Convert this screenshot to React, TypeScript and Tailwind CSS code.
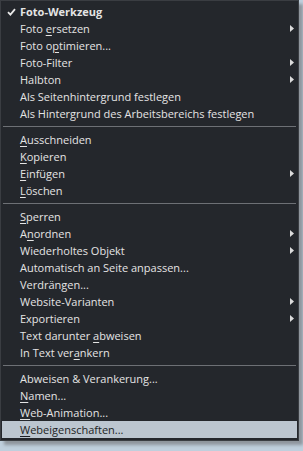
import type { ReactNode } from "react";

type Item =
  | { kind: "sep" }
  | { kind: "item"; label: ReactNode; sub?: boolean; checked?: boolean; bold?: boolean; active?: boolean };

const u = (c: string) => <span className="underline underline-offset-[2px]">{c}</span>;

const items: Item[] = [
  { kind: "item", label: "Foto-Werkzeug", checked: true, bold: true },
  { kind: "item", label: <>Foto {u("e")}rsetzen</>, sub: true },
  { kind: "item", label: <>Foto o{u("p")}timieren...</> },
  { kind: "item", label: "Foto-Filter", sub: true },
  { kind: "item", label: "Halbton", sub: true },
  { kind: "item", label: "Als Seitenhintergrund festlegen" },
  { kind: "item", label: "Als Hintergrund des Arbeitsbereichs festlegen" },
  { kind: "sep" },
  { kind: "item", label: <>{u("A")}usschneiden</> },
  { kind: "item", label: <>{u("K")}opieren</> },
  { kind: "item", label: <>{u("E")}infügen</>, sub: true },
  { kind: "item", label: <>{u("L")}öschen</> },
  { kind: "sep" },
  { kind: "item", label: <>{u("S")}perren</> },
  { kind: "item", label: <>A{u("n")}ordnen</>, sub: true },
  { kind: "item", label: "Wiederholtes Objekt", sub: true },
  { kind: "item", label: "Automatisch an Seite anpassen..." },
  { kind: "item", label: "Verdrängen..." },
  { kind: "item", label: "Website-Varianten", sub: true },
  { kind: "item", label: "Exportieren", sub: true },
  { kind: "item", label: <>Text darunter {u("a")}bweisen</> },
  { kind: "item", label: <>In Text ver{u("a")}nkern</> },
  { kind: "sep" },
  { kind: "item", label: "Abweisen & Verankerung..." },
  { kind: "item", label: <>{u("N")}amen...</> },
  { kind: "item", label: <>{u("W")}eb-Animation...</> },
  { kind: "item", label: <>{u("W")}ebeigenschaften...</>, active: true },
];

function Check() {
  return (
    <svg width="9" height="8" viewBox="0 0 9 8">
      <path d="M1 4.2 L3.4 6.6 L8 1.2" fill="none" stroke="#e8e8e8" strokeWidth="1.8" />
    </svg>
  );
}

function Arrow() {
  return (
    <svg width="4" height="7" viewBox="0 0 4 7">
      <path d="M0 0 L4 3.5 L0 7 Z" fill="#dcdcdc" />
    </svg>
  );
}

export default function App() {
  return (
    <div className="w-[303px] h-[451px] overflow-hidden bg-[#bfcfdd]">
      <div
        className="w-[299px] h-[441px] bg-[#24272c] border border-[#3a3d42] pt-[2px] text-[11px] text-[#e4e4e4] shadow-[4px_4px_3px_#8f969d]"
        style={{ fontFamily: '"Open Sans", "Noto Sans", sans-serif' }}
      >
        {items.map((it, i) =>
          it.kind === "sep" ? (
            <div key={i} className="h-[9px] flex items-center px-[2px]">
              <div className="h-px w-full bg-[#6d7075]" />
            </div>
          ) : (
            <div
              key={i}
              className={
                "h-[17px] mx-[1px] flex items-center pr-[3px] leading-none whitespace-nowrap " +
                (it.active ? "bg-[#bcc6d0] text-[#1c1f24]" : "") +
                (it.bold ? " font-bold" : "")
              }
            >
              <span className="w-[18px] pl-[5px] flex items-center">{it.checked && <Check />}</span>
              <span className="flex-1">{it.label}</span>
              {it.sub && <Arrow />}
            </div>
          )
        )}
      </div>
    </div>
  );
}
